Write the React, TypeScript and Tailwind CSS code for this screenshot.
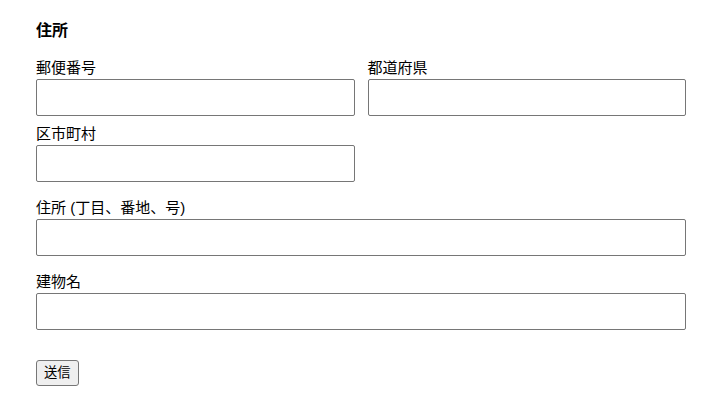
import React from "react";

const font = {
  fontFamily: '"Liberation Sans", "Noto Sans CJK JP", sans-serif',
};

function Field({ label, className = "" }: { label: string; className?: string }) {
  return (
    <div className={className}>
      <label className="block text-[15px] leading-[18px] mb-[2px] text-black">{label}</label>
      <input
        type="text"
        className="block w-full h-[37px] border border-[#767676] rounded-[2px] bg-white px-2"
      />
    </div>
  );
}

export default function App() {
  return (
    <div className="min-h-screen bg-white px-[36px] pt-[19px]" style={font}>
      <div className="w-[650px]">
        <h2 className="text-[16px] leading-[24px] font-bold mb-[16px] text-black">住所</h2>

        <div className="grid grid-cols-2 gap-x-[13px] gap-y-[9px]">
          <Field label="郵便番号" />
          <Field label="都道府県" />
          <Field label="区市町村" />
        </div>

        <Field label="住所 (丁目、番地、号)" className="mt-[17px]" />
        <Field label="建物名" className="mt-[17px]" />

        <button
          type="button"
          className="mt-[30px] h-[26px] px-[7px] text-[13.3px] bg-[#efefef] border border-[#767676] rounded-[3px] text-black"
        >
          送信
        </button>
      </div>
    </div>
  );
}
